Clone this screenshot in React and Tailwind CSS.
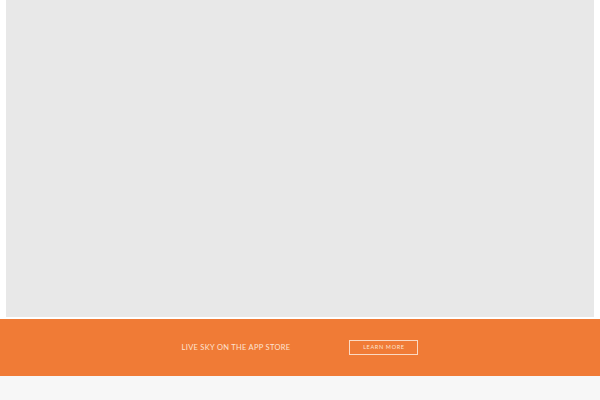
import React from 'react';

export default function App() {
  return (
    <div className="w-[600px] h-[400px] bg-white overflow-hidden" style={{ fontFamily: 'Lato, "Open Sans", sans-serif' }}>
      <div className="px-[6px]">
        <div className="h-[317px] bg-[#e8e8e8]" />
      </div>
      <div className="mt-[2px] h-[57px] bg-[#f07b36] flex items-center justify-center gap-[59px]">
        <span className="text-[7.5px] tracking-[0.04em] text-[#fde3d2] uppercase mt-[1px]">Live Sky on the App Store</span>
        <a className="w-[69px] h-[15px] border border-[#fbd9c3] flex items-center justify-center text-[5.5px] tracking-[0.12em] text-[#fde3d2] uppercase">Learn More</a>
      </div>
      <div className="h-[24px] bg-[#f7f7f7]" />
    </div>
  );
}
